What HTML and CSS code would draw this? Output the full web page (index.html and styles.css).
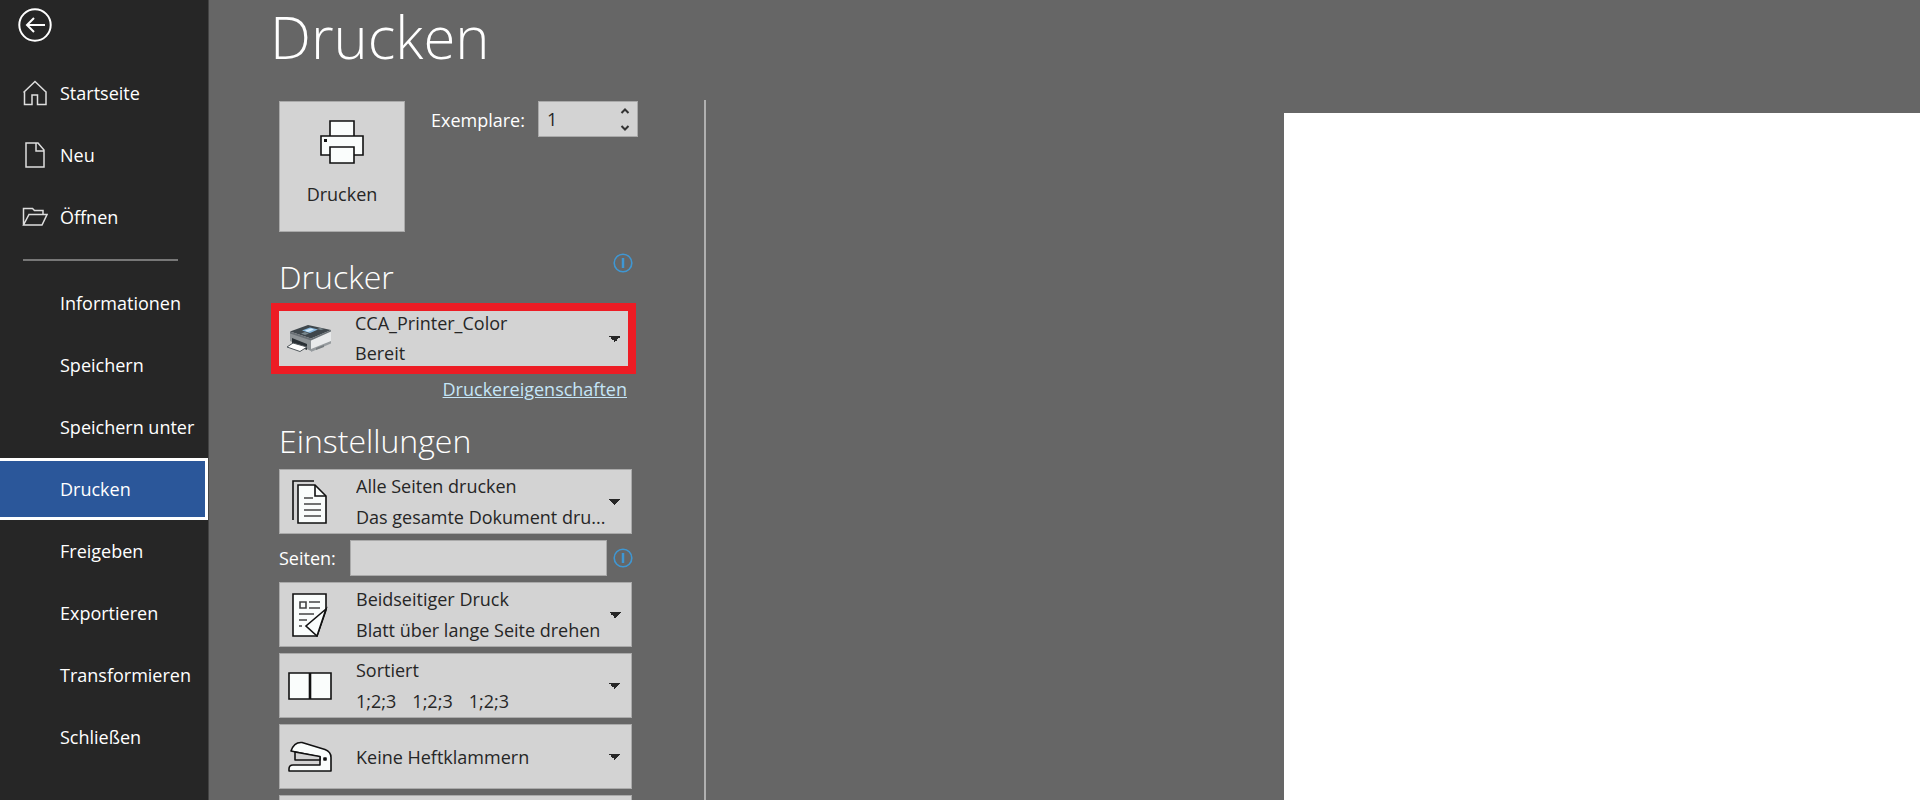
FILE: index.html
```html
<!DOCTYPE html>
<html lang="de">

<head>
    <title>Drucken</title>
    <meta charset="utf-8">
    <meta name="viewport" content="width=device-width, initial-scale=1.0">
    <link rel="stylesheet" href="styles.css">
</head>

<body>
    <nav class="sidebar">
        <button class="back" type="button" aria-label="Zurück">
            <svg width="34" height="34" viewBox="0 0 34 34" fill="none" stroke="#fff" stroke-width="2">
                <circle cx="17" cy="17" r="15.7" />
                <path d="M27 17H9M16 10l-7 7 7 7" />
            </svg>
        </button>
        <a class="nav-item" href="#">
            <svg width="26" height="26" viewBox="0 0 26 26" fill="none" stroke="#dedede" stroke-width="1.5">
                <path d="M1.5 12.5L13 1.5l11.5 11M2.5 11.5V24.5H10V15h5.5v9.5H24V11.5" />
            </svg>
            <span>Startseite</span>
        </a>
        <a class="nav-item" href="#">
            <svg width="26" height="26" viewBox="0 0 26 26" fill="none" stroke="#dedede" stroke-width="1.5">
                <path d="M4 1h12l6 7v17H4zM14 1v8h8" />
            </svg>
            <span>Neu</span>
        </a>
        <a class="nav-item" href="#">
            <svg width="26" height="26" viewBox="0 0 26 26" fill="none" stroke="#dedede" stroke-width="1.5">
                <path d="M1.5 21V4.5h9l2 2H21v4M1.5 21l5.5-10.5h18L20 21z" />
            </svg>
            <span>Öffnen</span>
        </a>
        <hr class="nav-line">
        <a class="nav-item" href="#"><span>Informationen</span></a>
        <a class="nav-item" href="#"><span>Speichern</span></a>
        <a class="nav-item" href="#"><span>Speichern unter</span></a>
        <a class="nav-item active" href="#"><span>Drucken</span></a>
        <a class="nav-item" href="#"><span>Freigeben</span></a>
        <a class="nav-item" href="#"><span>Exportieren</span></a>
        <a class="nav-item" href="#"><span>Transformieren</span></a>
        <a class="nav-item" href="#"><span>Schließen</span></a>
    </nav>

    <main class="content">
        <h1>Drucken</h1>
        <div class="columns">
            <form class="settings">
                <div class="print-row">
                    <button class="print-button" type="button">
                        <svg width="44" height="44" viewBox="0 0 44 44" fill="#fafdfc" stroke="#111" stroke-width="1.6">
                            <path d="M10 16V1h24v15" />
                            <path d="M1 16h42v19H1z" />
                            <path d="M10 27h24v16H10z" />
                            <path d="M4 19h3v3H4z" fill="#111" stroke="none" />
                        </svg>
                        <span>Drucken</span>
                    </button>
                    <label class="copies-label" for="copies">Exemplare:</label>
                    <div class="stepper">
                        <input type="number" id="copies" value="1" min="1">
                        <div class="stepper-buttons">
                            <button type="button" aria-label="Mehr">
                                <svg width="10" height="6" viewBox="0 0 10 6" fill="none" stroke="#333" stroke-width="2">
                                    <path d="M1.5 5L5 1.5 8.5 5" />
                                </svg>
                            </button>
                            <button type="button" aria-label="Weniger">
                                <svg width="10" height="6" viewBox="0 0 10 6" fill="none" stroke="#333" stroke-width="2">
                                    <path d="M1.5 1L5 4.5 8.5 1" />
                                </svg>
                            </button>
                        </div>
                    </div>
                </div>

                <div class="heading-row">
                    <h2>Drucker</h2>
                    <button class="info" type="button" aria-label="Druckerstatus">
                        <svg width="20" height="20" viewBox="0 0 20 20" fill="none" stroke="#3f97d3">
                            <circle cx="10" cy="10" r="8.8" stroke-width="1.6" />
                            <path d="M10 5v10" stroke-width="2.5" />
                        </svg>
                    </button>
                </div>
                <div class="dropdown highlighted">
                    <svg class="dropdown-icon" width="44" height="30" viewBox="0 0 44 30">
                        <path d="M3 8v9l21 10V15z" fill="#8d9396" />
                        <path d="M24 14l20-7v12l-20 9z" fill="#e8eaeb" />
                        <path d="M24 25l20-8v2.5l-20 8.5z" fill="#969b9e" />
                        <path d="M3 7.5L21 1l23 5-20 8.5z" fill="#3f474c" />
                        <path d="M3 7.5l21 7 20-8.5v1.5l-20 9-21-7z" fill="#697075" />
                        <path d="M15 6.5l8-3 8 2-8 3.5z" fill="#8abbe0" />
                        <path d="M18 6.5l6-2 3 1-6 2.5z" fill="#d3eafa" />
                        <path d="M14 9.5l4-1.5 4 1.5-4 1.5zM30 5l3-1 4 1-3 1z" fill="#78868c" />
                        <path d="M5 14l15 6v6L5 20z" fill="#293035" />
                        <path d="M6 19l14 4-7 4.500L0 23z" fill="#fff" stroke="#50575b" />
                        <path d="M29 24l8-3v2l-8 3z" fill="#777d80" />
                    </svg>
                    <select aria-label="Drucker" aria-describedby="printer-state">
                        <option>CCA_Printer_Color</option>
                    </select>
                    <span class="detail" id="printer-state">Bereit</span>
                </div>
                <a class="properties" href="#">Druckereigenschaften</a>

                <h2 class="settings-title">Einstellungen</h2>
                <div class="dropdown">
                    <svg class="dropdown-icon" width="44" height="44" viewBox="0 0 44 44" fill="none" stroke="#111" stroke-width="1.6">
                        <path d="M5 40V1h21" />
                        <path d="M10 5h17l11 11v27H10z" fill="#fafdfc" />
                        <path d="M27 5v11h11" />
                        <path d="M16 18h9M16 24h17M16 30h17M16 36h17" stroke="#444" />
                    </svg>
                    <select aria-label="Druckbereich" aria-describedby="range-detail">
                        <option>Alle Seiten drucken</option>
                    </select>
                    <span class="detail" id="range-detail">Das gesamte Dokument dru...</span>
                </div>
                <div class="pages-row">
                    <label for="pages">Seiten:</label>
                    <input type="text" id="pages">
                    <button class="info" type="button" aria-label="Hilfe zu Seiten">
                        <svg width="20" height="20" viewBox="0 0 20 20" fill="none" stroke="#3f97d3">
                            <circle cx="10" cy="10" r="8.8" stroke-width="1.6" />
                            <path d="M10 5v10" stroke-width="2.5" />
                        </svg>
                    </button>
                </div>
                <div class="dropdown">
                    <svg class="dropdown-icon" width="44" height="44" viewBox="0 0 44 44" fill="none" stroke="#111" stroke-width="1.6">
                        <path d="M5 1h33v16l-9 26H5z" fill="#fafdfc" />
                        <path d="M38 16L18 33l11 10z" fill="#fafdfc" />
                        <path d="M12 9h6v6h-6zM21 9h11M21 15h11M11 21h15M11 27h8M11 33h3" stroke="#444" />
                    </svg>
                    <select aria-label="Beidseitiger Druck" aria-describedby="duplex-detail">
                        <option>Beidseitiger Druck</option>
                    </select>
                    <span class="detail" id="duplex-detail">Blatt über lange Seite drehen</span>
                </div>
                <div class="dropdown">
                    <svg class="dropdown-icon" width="44" height="28" viewBox="0 0 44 28" fill="#fafdfc" stroke="#111" stroke-width="1.6">
                        <path d="M1 1h20.5v26H1zM22.5 1H43v26H22.5z" />
                    </svg>
                    <select aria-label="Sortierung" aria-describedby="collate-detail">
                        <option>Sortiert</option>
                    </select>
                    <span class="detail sets" id="collate-detail"><span>1;2;3</span><span>1;2;3</span><span>1;2;3</span></span>
                </div>
                <div class="dropdown single">
                    <svg class="dropdown-icon" width="44" height="32" viewBox="0 0 44 32" fill="#fafdfc" stroke="#111" stroke-width="1.6" stroke-linejoin="round">
                        <path d="M3 10C5 4 9 1 14 1.5L37 8.5c4 1.5 6 4 6 8V30H1v-2q0-4 4-4h27v-8L3 10z" />
                        <path d="M7 11v8h25v-3.500z" fill="#d3d3d3" />
                        <path d="M36 17h2v2h-2z" fill="#111" />
                    </svg>
                    <select aria-label="Heftklammern">
                        <option>Keine Heftklammern</option>
                    </select>
                </div>
                <div class="dropdown single">
                    <select aria-label="Ausrichtung"></select>
                </div>
            </form>

            <section class="preview" aria-label="Vorschau">
                <div class="paper"></div>
            </section>
        </div>
    </main>
</body>

</html>
```

FILE: styles.css
```css
* {
    box-sizing: border-box;
}

body {
    display: flex;
    height: 100vh;
    margin: 0;
    overflow: hidden;
    background-color: #666;
    color: #fff;
    font-family: "Open Sans", "Noto Sans", sans-serif;
    font-size: 18px;
    line-height: 24px;
}

button,
input,
select {
    font: inherit;
    color: #262626;
}

button {
    padding: 0;
    border: none;
    background: none;
    cursor: pointer;
}

svg {
    display: block;
    flex: none;
}

h1,
h2 {
    margin: 0;
    font-weight: 300;
}

/* Left navigation */
.sidebar {
    flex: none;
    width: 209px;
    background-color: #262626;
    border-right: 1px solid #444;
}

.back {
    display: block;
    padding: 8px 18px 20px;
}

.nav-item {
    display: flex;
    align-items: center;
    gap: 12px;
    height: 62px;
    padding-left: 22px;
    color: #fff;
    text-decoration: none;
    white-space: nowrap;
}

.nav-item span:only-child {
    padding-left: 38px;
}

.nav-item.active {
    background-color: #2b579a;
    border: 3px solid #fff;
    border-left: none;
}

.nav-line {
    height: 2px;
    margin: 11px 30px 11px 23px;
    border: none;
    background-color: #777;
}

/* Print page */
.content {
    display: flex;
    flex-direction: column;
    flex: 1;
    min-width: 0;
}

h1 {
    padding-left: 61px;
    font-size: 58px;
    line-height: 74px;
}

.columns {
    display: flex;
    flex: 1;
    padding-top: 26px;
}

.settings {
    flex: none;
    width: 497px;
    padding: 1px 72px 0 70px;
    border-right: 2px solid #b0b0b0;
}

.print-row {
    display: flex;
    align-items: flex-start;
}

.print-button {
    display: flex;
    flex-direction: column;
    align-items: center;
    gap: 18px;
    width: 126px;
    height: 131px;
    padding-top: 18px;
    background-color: #d3d3d3;
    border: 1px solid #aaa;
}

.copies-label {
    padding: 7px 0 0 26px;
}

.stepper {
    display: flex;
    width: 100px;
    height: 36px;
    margin-left: auto;
    margin-right: -6px;
    background-color: #d3d3d3;
    border: 1px solid #aaa;
}

.stepper input {
    flex: 1;
    min-width: 0;
    padding: 0 8px;
    border: none;
    background: none;
    appearance: textfield;
}

.stepper input::-webkit-inner-spin-button {
    display: none;
}

.stepper-buttons {
    display: flex;
    flex-direction: column;
    width: 24px;
}

.stepper-buttons button {
    display: flex;
    flex: 1;
    align-items: center;
    justify-content: center;
}

h2 {
    font-size: 32px;
    line-height: 40px;
}

.heading-row {
    display: flex;
    align-items: flex-start;
    justify-content: space-between;
    margin: 21px 0 6px;
}

.heading-row h2 {
    padding-top: 4px;
}

.info {
    margin-right: -1px;
}

/* Tile with an icon, the select text and an optional second line */
.dropdown {
    --arrow-right: 10px;
    display: grid;
    grid-template-columns: 60px 1fr;
    grid-template-rows: 31px 32px;
    align-items: center;
    margin-bottom: 6px;
    background-color: #d3d3d3;
    border: 1px solid #aaa;
    color: #262626;
}

.dropdown-icon {
    grid-area: 1 / 1 / 3 / 2;
    justify-self: center;
    pointer-events: none;
    z-index: 1;
}

.dropdown select {
    grid-area: 1 / 1 / 3 / 3;
    width: 100%;
    height: 100%;
    padding: 4px 36px 35px 76px;
    border: none;
    border-radius: 0;
    appearance: none;
    background: linear-gradient(to bottom right, #262626 50%, transparent 50%) no-repeat right var(--arrow-right) center / 6px 6px,
        linear-gradient(to bottom left, #262626 50%, transparent 50%) no-repeat right calc(var(--arrow-right) + 6px) center / 6px 6px;
}

.dropdown .detail {
    grid-area: 2 / 1 / 3 / 3;
    padding-left: 76px;
    pointer-events: none;
    white-space: nowrap;
}

.dropdown.single select {
    padding-top: 0;
    padding-bottom: 0;
}

.dropdown.highlighted {
    --arrow-right: 7px;
    grid-template-rows: 28px 27px;
    margin: 0 -4px 0 -8px;
    border: 8px solid #ed1c24;
}

.dropdown.highlighted select {
    padding-top: 0;
    padding-bottom: 31px;
}

.sets {
    display: flex;
    gap: 16px;
}

.properties {
    display: block;
    width: fit-content;
    margin: 3px 5px 0 auto;
    color: #c5e5f7;
}

.settings-title {
    margin: 20px 0 8px;
}

.pages-row {
    display: flex;
    align-items: center;
    margin-bottom: 6px;
}

.pages-row input {
    flex: 1;
    min-width: 0;
    height: 36px;
    margin: 0 6px 0 0;
    padding: 0 8px;
    background-color: #d3d3d3;
    border: 1px solid #aaa;
}

.pages-row label {
    width: 71px;
}

/* Preview */
.preview {
    display: grid;
    flex: 1;
    grid-template-columns: 10fr 11fr;
    padding-top: 13px;
}

.paper {
    grid-column: 2;
    background-color: #fff;
}
```
